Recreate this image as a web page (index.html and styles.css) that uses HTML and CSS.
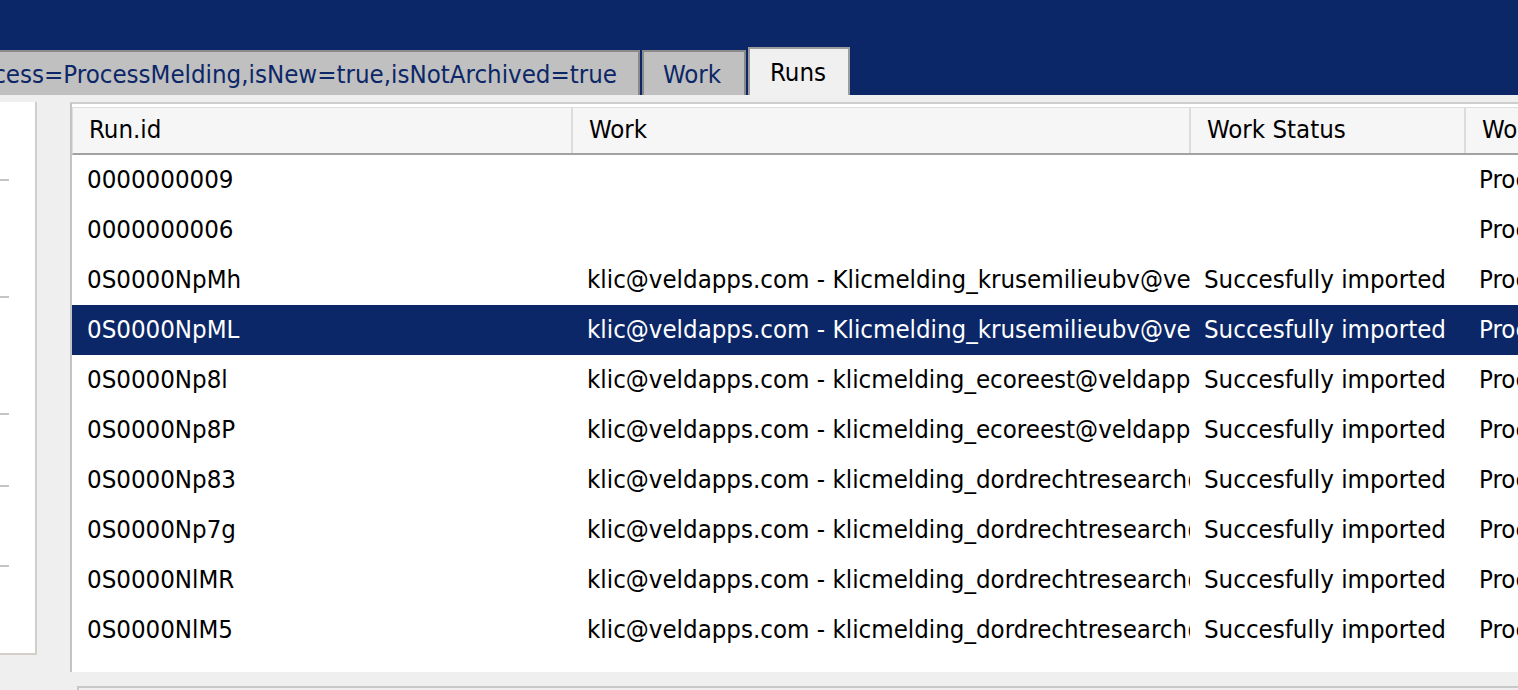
FILE: index.html
```html
<!DOCTYPE html>
<html>
<head>
<meta charset="utf-8">
<link rel="stylesheet" href="styles.css">
</head>
<body>
<div class="topbar">
  <div class="tabs">
    <div class="tab tab-first"><span>Process=ProcessMelding,isNew=true,isNotArchived=true</span></div>
    <div class="tab tab-work">Work</div>
    <div class="tab tab-active">Runs</div>
  </div>
</div>
<div class="content">
  <div class="side">
    <div class="tick t1"></div>
    <div class="tick t2"></div>
    <div class="tick t3"></div>
    <div class="tick t4"></div>
    <div class="tick t5"></div>
  </div>
  <div class="main">
    <div class="grid">
      <div class="row head">
        <div class="hc">Run.id</div>
        <div class="hc">Work</div>
        <div class="hc">Work Status</div>
        <div class="hc">Work Type</div>
      </div>
      <div class="row"><div class="c">0000000009</div><div class="c"></div><div class="c"></div><div class="c">Process</div></div>
      <div class="row"><div class="c">0000000006</div><div class="c"></div><div class="c"></div><div class="c">Process</div></div>
      <div class="row"><div class="c">0S0000NpMh</div><div class="c">klic@veldapps.com - Klicmelding_krusemilieubv@veldapps.com</div><div class="c">Succesfully imported</div><div class="c">Process</div></div>
      <div class="row sel"><div class="c">0S0000NpML</div><div class="c">klic@veldapps.com - Klicmelding_krusemilieubv@veldapps.com</div><div class="c">Succesfully imported</div><div class="c">Process</div></div>
      <div class="row"><div class="c">0S0000Np8l</div><div class="c">klic@veldapps.com - klicmelding_ecoreest@veldapps.com</div><div class="c">Succesfully imported</div><div class="c">Process</div></div>
      <div class="row"><div class="c">0S0000Np8P</div><div class="c">klic@veldapps.com - klicmelding_ecoreest@veldapps.com</div><div class="c">Succesfully imported</div><div class="c">Process</div></div>
      <div class="row"><div class="c">0S0000Np83</div><div class="c">klic@veldapps.com - klicmelding_dordrechtresearch@veldapps.com</div><div class="c">Succesfully imported</div><div class="c">Process</div></div>
      <div class="row"><div class="c">0S0000Np7g</div><div class="c">klic@veldapps.com - klicmelding_dordrechtresearch@veldapps.com</div><div class="c">Succesfully imported</div><div class="c">Process</div></div>
      <div class="row"><div class="c">0S0000NlMR</div><div class="c">klic@veldapps.com - klicmelding_dordrechtresearch@veldapps.com</div><div class="c">Succesfully imported</div><div class="c">Process</div></div>
      <div class="row"><div class="c">0S0000NlM5</div><div class="c">klic@veldapps.com - klicmelding_dordrechtresearch@veldapps.com</div><div class="c">Succesfully imported</div><div class="c">Process</div></div>
    </div>
    <div class="hscroll"></div>
  </div>
</div>
</body>
</html>
```
FILE: styles.css
```css
html, body {
  margin: 0;
  padding: 0;
  width: 1518px;
  height: 690px;
  overflow: hidden;
  background: #efefef;
  font-family: "DejaVu Sans Condensed", "DejaVu Sans", sans-serif;
  font-size: 25.6px;
  color: #000;
}

.topbar {
  background: #0c2767;
  height: 95px;
  display: flex;
  align-items: flex-end;
}

.tabs {
  display: flex;
  align-items: flex-end;
  gap: 2px;
}

.tab {
  box-sizing: border-box;
  height: 45px;
  background: #c0c0c0;
  border: 2px solid #8a8a8a;
  border-bottom: none;
  color: #0c2767;
  display: flex;
  align-items: center;
  white-space: nowrap;
}

.tab-first {
  width: 640px;
  border-left: none;
  justify-content: flex-end;
  padding-right: 21px;
  overflow: hidden;
}

.tab-work {
  width: 104px;
  padding-left: 19px;
}

.tab-active {
  width: 102px;
  height: 48px;
  background: #f0f0f0;
  border-color: #9c9c9c;
  color: #000;
  padding-left: 20px;
  padding-bottom: 1px;
}

.content {
  display: flex;
  align-items: flex-start;
}

.side {
  box-sizing: border-box;
  width: 37px;
  height: 553px;
  margin-top: 7px;
  background: #fff;
  border-right: 2px solid #d2cec9;
  border-bottom: 2px solid #d2cec9;
  display: flex;
  flex-direction: column;
}

.tick {
  width: 9px;
  height: 2px;
  background: #c4c4c4;
  flex: none;
}
.t1 { margin-top: 77px; }
.t2 { margin-top: 115px; }
.t3 { margin-top: 115px; }
.t4 { margin-top: 70px; }
.t5 { margin-top: 78px; }

.main {
  margin-left: 33px;
  margin-top: 7px;
  flex: 1;
  min-width: 0;
}

.grid {
  box-sizing: border-box;
  height: 570px;
  background: #fff;
  border-left: 2px solid #c4c4c4;
  border-top: 2px solid #cdcdcd;
  padding-top: 3px;
  overflow: hidden;
}

.row {
  display: grid;
  grid-template-columns: 500px 618px 275px 300px;
  height: 50px;
  align-items: center;
}

.row.head {
  box-sizing: border-box;
  height: 48px;
  background: #f6f6f6;
  border-top: 1px solid #dedede;
  border-left: 1px solid #dedede;
  border-bottom: 2px solid #a2a2a2;
  align-items: stretch;
}

.hc {
  display: flex;
  align-items: center;
  padding-left: 16px;
  padding-bottom: 3px;
  border-right: 2px solid #dcdcdc;
  white-space: nowrap;
  overflow: hidden;
}

.c {
  padding-left: 15px;
  padding-bottom: 2px;
  white-space: nowrap;
  overflow: hidden;
  text-overflow: clip;
}
.c:nth-child(3) { padding-left: 14px; }
.c:nth-child(4) { padding-left: 14px; }

.row.sel {
  background: #0c2767;
  color: #fff;
}

.hscroll {
  margin-top: 14px;
  margin-left: 7px;
  height: 10px;
  border-top: 2px solid #c8c8c8;
  border-left: 2px solid #c8c8c8;
}
```
